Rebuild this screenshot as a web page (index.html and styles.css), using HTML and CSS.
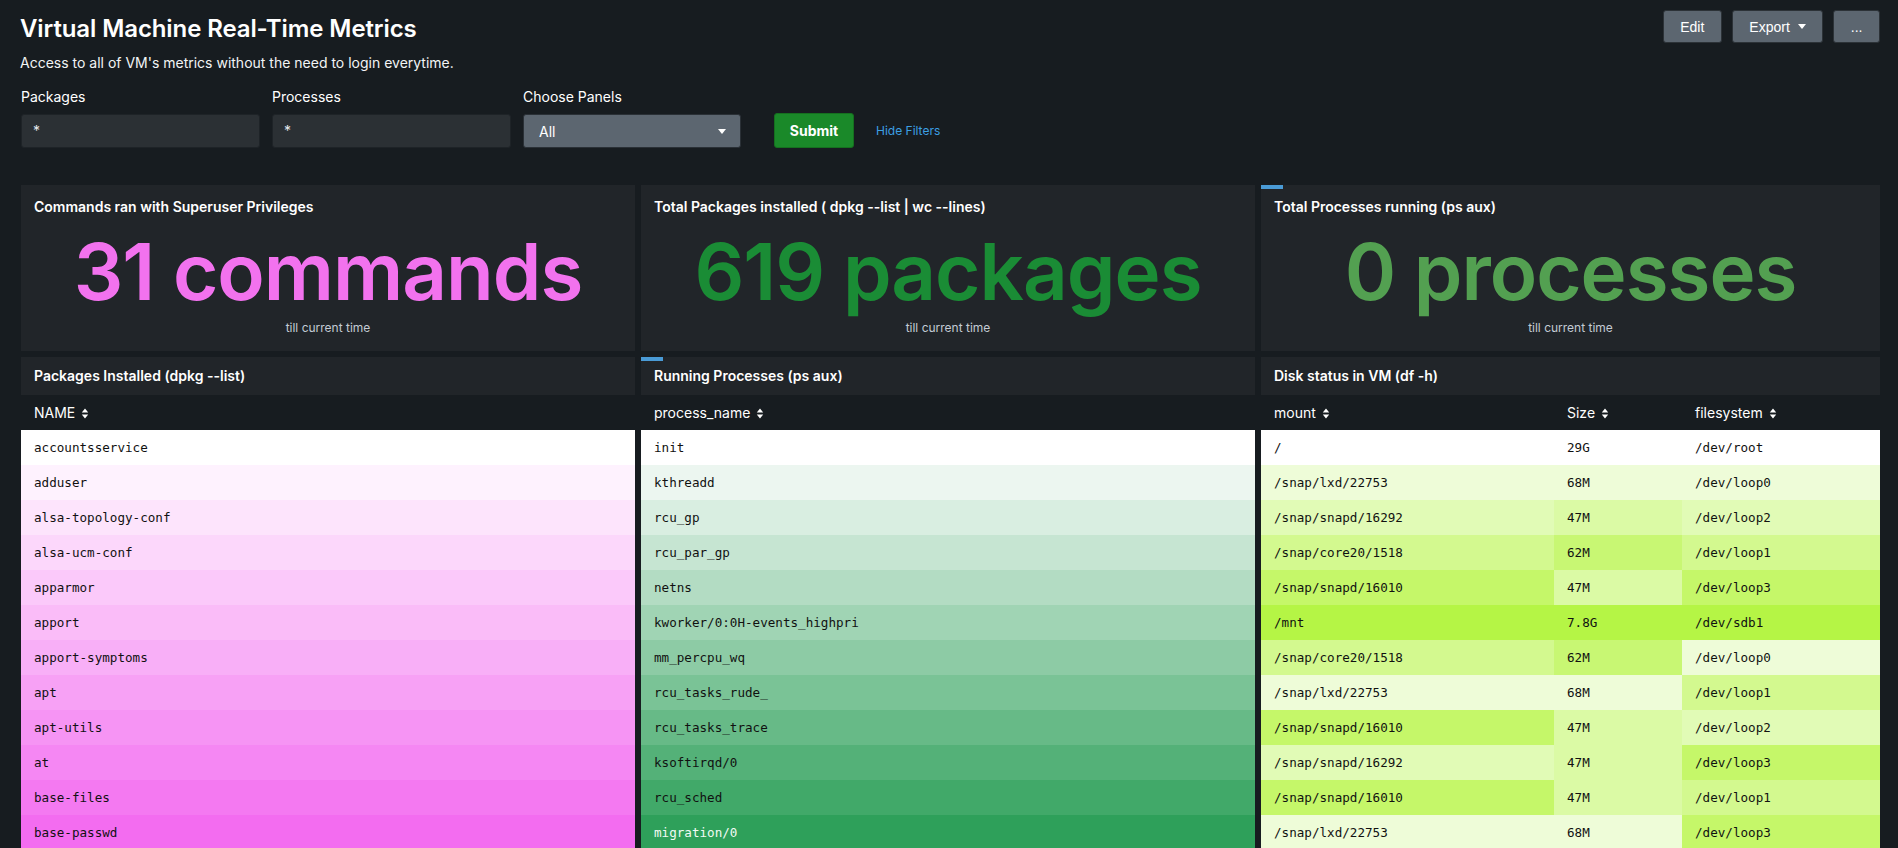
FILE: index.html
```html
<!DOCTYPE html>
<html>
<head>
<meta charset="utf-8">
<title>Virtual Machine Real-Time Metrics</title>
<link rel="stylesheet" href="styles.css">
</head>
<body>
<header class="top">
  <div class="heading">
    <h1 class="title">Virtual Machine Real-Time Metrics</h1>
    <p class="desc">Access to all of VM's metrics without the need to login everytime.</p>
  </div>
  <div class="actions">
    <button class="btn">Edit</button>
    <button class="btn">Export <span class="caret"></span></button>
    <button class="btn">...</button>
  </div>
</header>

<form class="filters">
  <div class="field w-input">
    <label class="label">Packages</label>
    <div class="input">*</div>
  </div>
  <div class="field w-input">
    <label class="label">Processes</label>
    <div class="input">*</div>
  </div>
  <div class="field w-select">
    <label class="label">Choose Panels</label>
    <div class="select"><span>All</span><span class="caret"></span></div>
  </div>
  <button type="button" class="submit">Submit</button>
  <a class="hide-link">Hide Filters</a>
</form>

<section class="row row-single">
  <div class="panel single">
    <h2 class="panel-title">Commands ran with Superuser Privileges</h2>
    <div class="big pink">31 commands</div>
    <div class="under">till current time</div>
  </div>
  <div class="panel single">
    <h2 class="panel-title">Total Packages installed ( dpkg --list | wc --lines)</h2>
    <div class="big green">619 packages</div>
    <div class="under">till current time</div>
  </div>
  <div class="panel single">
    <span class="loading"></span>
    <h2 class="panel-title">Total Processes running (ps aux)</h2>
    <div class="big lightgreen">0 processes</div>
    <div class="under">till current time</div>
  </div>
</section>

<section class="row row-tables">
  <div class="tpanel">
    <h2 class="panel-head">Packages Installed (dpkg --list)</h2>
    <table class="data">
      <thead><tr><th>NAME <svg class="sort" viewBox="0 0 8 12"><path d="M4 0.5 L7.5 5 H0.5 Z M4 11.5 L7.5 7 H0.5 Z"/></svg></th></tr></thead>
      <tbody>
        <tr><td style="background:#ffffff">accountsservice</td></tr>
        <tr><td style="background:#fef2fe">adduser</td></tr>
        <tr><td style="background:#fde4fc">alsa-topology-conf</td></tr>
        <tr><td style="background:#fcd7fb">alsa-ucm-conf</td></tr>
        <tr><td style="background:#fbc9fa">apparmor</td></tr>
        <tr><td style="background:#fabcf8">apport</td></tr>
        <tr><td style="background:#f8aff7">apport-symptoms</td></tr>
        <tr><td style="background:#f7a1f5">apt</td></tr>
        <tr><td style="background:#f694f4">apt-utils</td></tr>
        <tr><td style="background:#f587f3">at</td></tr>
        <tr><td style="background:#f479f1">base-files</td></tr>
        <tr><td style="background:#f36cf0">base-passwd</td></tr>
      </tbody>
    </table>
  </div>
  <div class="tpanel">
    <span class="loading"></span>
    <h2 class="panel-head">Running Processes (ps aux)</h2>
    <table class="data">
      <thead><tr><th>process_name <svg class="sort" viewBox="0 0 8 12"><path d="M4 0.5 L7.5 5 H0.5 Z M4 11.5 L7.5 7 H0.5 Z"/></svg></th></tr></thead>
      <tbody>
        <tr><td style="background:#ffffff">init</td></tr>
        <tr><td style="background:#ecf6f0">kthreadd</td></tr>
        <tr><td style="background:#d9eee1">rcu_gp</td></tr>
        <tr><td style="background:#c6e5d2">rcu_par_gp</td></tr>
        <tr><td style="background:#b3dcc3">netns</td></tr>
        <tr><td style="background:#a0d4b4">kworker/0:0H-events_highpri</td></tr>
        <tr><td style="background:#8dcba5">mm_percpu_wq</td></tr>
        <tr><td style="background:#7ac396">rcu_tasks_rude_</td></tr>
        <tr><td style="background:#67ba87">rcu_tasks_trace</td></tr>
        <tr><td style="background:#54b178">ksoftirqd/0</td></tr>
        <tr><td style="background:#41a969">rcu_sched</td></tr>
        <tr><td class="light-text" style="background:#2ea05a">migration/0</td></tr>
      </tbody>
    </table>
  </div>
  <div class="tpanel">
    <h2 class="panel-head">Disk status in VM (df -h)</h2>
    <table class="data disk">
      <colgroup><col class="c-mount"><col class="c-size"><col></colgroup>
      <thead><tr>
        <th>mount <svg class="sort" viewBox="0 0 8 12"><path d="M4 0.5 L7.5 5 H0.5 Z M4 11.5 L7.5 7 H0.5 Z"/></svg></th>
        <th>Size <svg class="sort" viewBox="0 0 8 12"><path d="M4 0.5 L7.5 5 H0.5 Z M4 11.5 L7.5 7 H0.5 Z"/></svg></th>
        <th>filesystem <svg class="sort" viewBox="0 0 8 12"><path d="M4 0.5 L7.5 5 H0.5 Z M4 11.5 L7.5 7 H0.5 Z"/></svg></th>
      </tr></thead>
      <tbody>
        <tr><td class="l0">/</td><td class="l0">29G</td><td class="l0">/dev/root</td></tr>
        <tr><td class="l1">/snap/lxd/22753</td><td class="l1">68M</td><td class="l1">/dev/loop0</td></tr>
        <tr><td class="l2">/snap/snapd/16292</td><td class="s47">47M</td><td class="l2">/dev/loop2</td></tr>
        <tr><td class="l3">/snap/core20/1518</td><td class="s62">62M</td><td class="l3">/dev/loop1</td></tr>
        <tr><td class="l4">/snap/snapd/16010</td><td class="s47">47M</td><td class="l4">/dev/loop3</td></tr>
        <tr><td class="l5">/mnt</td><td class="l5">7.8G</td><td class="l5">/dev/sdb1</td></tr>
        <tr><td class="l3">/snap/core20/1518</td><td class="s62">62M</td><td class="l1">/dev/loop0</td></tr>
        <tr><td class="l1">/snap/lxd/22753</td><td class="l1">68M</td><td class="l3">/dev/loop1</td></tr>
        <tr><td class="l4">/snap/snapd/16010</td><td class="s47">47M</td><td class="l2">/dev/loop2</td></tr>
        <tr><td class="l2">/snap/snapd/16292</td><td class="s47">47M</td><td class="l4">/dev/loop3</td></tr>
        <tr><td class="l4">/snap/snapd/16010</td><td class="s47">47M</td><td class="l3">/dev/loop1</td></tr>
        <tr><td class="l1">/snap/lxd/22753</td><td class="l1">68M</td><td class="l4">/dev/loop3</td></tr>
      </tbody>
    </table>
  </div>
</section>
</body>
</html>
```

FILE: styles.css
```css
* { box-sizing: border-box; }

html, body {
  margin: 0;
  background: #171c20;
  color: #ffffff;
  font-family: Inter, Lato, "Liberation Sans", sans-serif;
}

body { overflow: hidden; }

.top {
  display: flex;
  justify-content: space-between;
  align-items: flex-start;
  padding: 0 18px 0 20px;
}

.title {
  margin: 14px 0 0;
  font-size: 24px;
  line-height: 30px;
  font-weight: 600;
  letter-spacing: -0.1px;
}

.desc {
  margin: 10px 0 0;
  font-size: 14px;
  line-height: 18px;
  color: #f2f4f5;
}

.actions {
  display: flex;
  gap: 10px;
  margin-top: 10px;
}

.btn {
  height: 33px;
  padding: 0 16.5px;
  background: #5c6670;
  border: 1px solid #2c3237;
  border-radius: 3px;
  color: #ffffff;
  font-family: "Liberation Sans", Arial, sans-serif;
  font-size: 14px;
  display: flex;
  align-items: center;
  gap: 8px;
}

.caret {
  display: inline-block;
  width: 0;
  height: 0;
  border-left: 4px solid transparent;
  border-right: 4px solid transparent;
  border-top: 5px solid #ffffff;
}

.filters {
  display: flex;
  align-items: flex-end;
  gap: 12px;
  margin: 16px 0 0;
  padding: 0 0 0 21px;
}

.field {
  display: flex;
  flex-direction: column;
  gap: 8px;
}

.w-input { width: 239px; }
.w-select { width: 218px; }

.label {
  font-size: 14px;
  line-height: 18px;
  color: #ffffff;
}

.input {
  height: 34px;
  background: #2b3034;
  border: 1px solid #1e2327;
  border-radius: 3px;
  padding: 0 11px;
  font-size: 14px;
  line-height: 32px;
  color: #e6eaee;
}

.select {
  height: 34px;
  background: #5c6670;
  border: 1px solid #2a3036;
  border-radius: 3px;
  padding: 0 14px 0 15px;
  display: flex;
  align-items: center;
  justify-content: space-between;
  font-size: 14px;
  color: #ffffff;
}

.submit {
  margin-left: 21px;
  height: 35px;
  width: 80px;
  background: #1a8929;
  border: 1px solid #15701f;
  border-radius: 3px;
  color: #ffffff;
  font-family: Inter, Lato, sans-serif;
  font-weight: 700;
  font-size: 14px;
}

.hide-link {
  margin-left: 10px;
  align-self: flex-end;
  line-height: 35px;
  font-size: 12px;
  color: #3c9fe3;
}

.row {
  display: grid;
  grid-template-columns: 614px 614px 1fr;
  column-gap: 6px;
  padding: 0 18px 0 21px;
}

.row-single { margin-top: 37px; }
.row-tables { margin-top: 6px; }

.panel {
  position: relative;
  height: 166px;
  background: #212529;
  padding: 13px 13px 0;
  display: flex;
  flex-direction: column;
  align-items: center;
}

.panel-title {
  align-self: stretch;
  margin: 0;
  font-size: 14px;
  line-height: 17px;
  font-weight: 600;
  color: #ffffff;
}

.big {
  margin-top: 10px;
  font-size: 78px;
  line-height: 94px;
  font-weight: 600;
  letter-spacing: -1px;
  white-space: nowrap;
}

.pink { color: #f272ee; }
.green { color: #1a8c35; }
.lightgreen { color: #53a051; }

.under {
  margin-top: 2px;
  font-size: 12px;
  line-height: 14px;
  color: #c3cbd4;
}

.loading {
  position: absolute;
  left: 0;
  top: 0;
  width: 22px;
  height: 4px;
  background: #4a9bd6;
}

.tpanel { position: relative; }

.panel-head {
  margin: 0;
  height: 38px;
  background: #212529;
  padding: 0 13px;
  font-size: 14px;
  line-height: 38px;
  font-weight: 600;
  color: #ffffff;
}

.data {
  width: 100%;
  border-collapse: collapse;
  table-layout: fixed;
}

.data th {
  height: 35px;
  padding: 0 13px;
  text-align: left;
  font-size: 14px;
  font-weight: 400;
  color: #ffffff;
  white-space: nowrap;
}

.sort {
  width: 8px;
  height: 11px;
  fill: #ffffff;
  vertical-align: -1px;
  margin-left: 2px;
}

.data td {
  height: 35px;
  padding: 0 13px;
  font-family: "DejaVu Sans Mono", "Liberation Mono", monospace;
  font-size: 12.6px;
  color: #111111;
  white-space: nowrap;
}

.data td.light-text { color: #f2fbf4; }

.c-mount { width: 293px; }
.c-size { width: 128px; }

.l0 { background: #ffffff; }
.l1 { background: #eefcd8; }
.l2 { background: #e1fbb6; }
.l3 { background: #d3f98f; }
.l4 { background: #c5f769; }
.l5 { background: #b5f545; }
.s47 { background: #dbfaa5; }
.s62 { background: #c8f773; }
```
